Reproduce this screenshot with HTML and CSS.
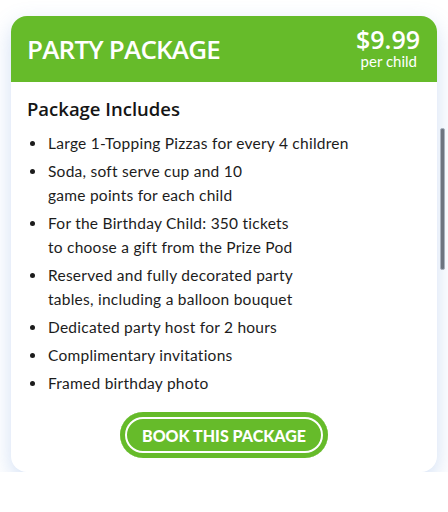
FILE: index.html
```html
<!DOCTYPE html>
<html>
<head>
<meta charset="utf-8">
<link rel="stylesheet" href="styles.css">
</head>
<body>
<div class="card">
  <div class="card-header">
    <h1 class="title">PARTY PACKAGE</h1>
    <div class="price">
      <div class="amount">$9.99</div>
      <div class="per">per child</div>
    </div>
  </div>
  <div class="card-body">
    <h2 class="subtitle">Package Includes</h2>
    <ul class="items">
      <li>Large 1-Topping Pizzas for every 4 children</li>
      <li>Soda, soft serve cup and 10<br>game points for each child</li>
      <li>For the Birthday Child: 350 tickets<br>to choose a gift from the Prize Pod</li>
      <li>Reserved and fully decorated party<br>tables, including a balloon bouquet</li>
      <li>Dedicated party host for 2 hours</li>
      <li>Complimentary invitations</li>
      <li>Framed birthday photo</li>
    </ul>
    <div class="actions">
      <button class="book">BOOK THIS PACKAGE</button>
    </div>
  </div>
  <div class="scrollbar"></div>
</div>
</body>
</html>
```
FILE: styles.css
```css
html, body {
  margin: 0;
  padding: 0;
  background: #ffffff;
}
body {
  padding: 16px 11px 0 11px;
  font-family: "Lato", "Open Sans", sans-serif;
  color: #1c1c1c;
}
.card {
  position: relative;
  width: 426px;
  height: 456px;
  box-sizing: border-box;
  border-radius: 16px;
  background: #ffffff;
  box-shadow: 0 8px 22px rgba(90, 140, 215, 0.28);
  display: flex;
  flex-direction: column;
}
.card-header {
  height: 66px;
  background: #66bb2a;
  border-radius: 16px 16px 0 0;
  display: flex;
  align-items: center;
  justify-content: space-between;
  padding: 0 17px 0 16px;
  box-sizing: border-box;
  color: #ffffff;
}
.title {
  margin: 0;
  font-family: "Open Sans", sans-serif;
  font-weight: 600;
  font-size: 26px;
  letter-spacing: -0.8px;
  line-height: 36px;
}
.price {
  display: flex;
  flex-direction: column;
  align-items: flex-end;
  padding-bottom: 4px;
}
.amount {
  font-family: "Open Sans", sans-serif;
  font-weight: 600;
  font-size: 25px;
  line-height: 28px;
}
.per {
  font-family: "Lato", sans-serif;
  font-size: 15px;
  line-height: 16px;
  margin-right: 3px;
}
.card-body {
  padding: 14px 16px 14px 16px;
  display: flex;
  flex-direction: column;
}
.subtitle {
  margin: 0 0 9px 0;
  font-family: "Open Sans", sans-serif;
  font-weight: 600;
  font-size: 18.5px;
  line-height: 26px;
  color: #151515;
}
.items {
  list-style: none;
  margin: 0;
  padding: 0;
  display: flex;
  flex-direction: column;
  gap: 4px;
}
.items li {
  position: relative;
  padding-left: 21px;
  font-size: 15.5px;
  line-height: 24px;
  letter-spacing: 0.25px;
}
.items li::before {
  content: "";
  position: absolute;
  left: 3px;
  top: 10px;
  width: 5px;
  height: 5px;
  border-radius: 50%;
  background: #1c1c1c;
}
.actions {
  display: flex;
  justify-content: center;
  margin-top: 17px;
}
.book {
  width: 208px;
  height: 46px;
  border: none;
  border-radius: 23px;
  background: #66bb2a;
  color: #ffffff;
  font-family: "Lato", sans-serif;
  font-weight: 900;
  font-size: 16px;
  letter-spacing: 0;
  box-shadow: inset 0 0 0 5px #66bb2a, inset 0 0 0 7px #ffffff;
  padding: 0;
}
.scrollbar {
  position: absolute;
  right: -8px;
  top: 112px;
  width: 3px;
  height: 140px;
  background: #6d7480;
  border: 1px solid #a9b2bf;
  border-radius: 2px;
}
```
